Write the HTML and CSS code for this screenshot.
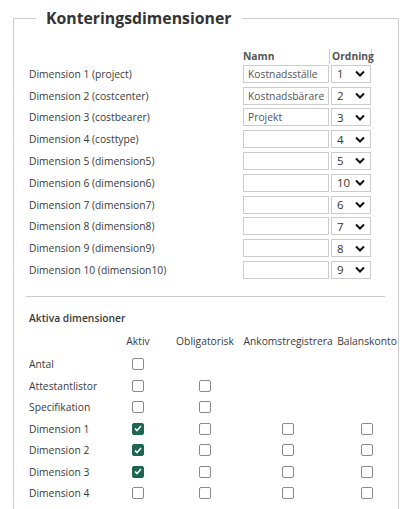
FILE: index.html
```html
<!DOCTYPE html>
<html>
<head>
  <meta charset="utf-8">
  <link rel="stylesheet" href="styles.css">
</head>
<body>
  <div class="page">
    <fieldset class="box">
      <legend>Konteringsdimensioner</legend>

      <!-- dimension names and order -->
      <div class="dims">
        <div class="dim-head">
          <span class="col-label"></span>
          <span class="col-name">Namn</span>
          <span class="col-order">Ordning</span>
        </div>
        <div class="dim-row">
          <span class="col-label">Dimension 1 (project)</span>
          <input class="name-input" type="text" value="Kostnadsställe">
          <div class="order-select"><span>1</span><svg width="10" height="7" viewBox="0 0 10 7"><path d="M1 1.5l4 4 4-4" fill="none" stroke="#111" stroke-width="2"/></svg></div>
        </div>
        <div class="dim-row">
          <span class="col-label">Dimension 2 (costcenter)</span>
          <input class="name-input" type="text" value="Kostnadsbärare">
          <div class="order-select"><span>2</span><svg width="10" height="7" viewBox="0 0 10 7"><path d="M1 1.5l4 4 4-4" fill="none" stroke="#111" stroke-width="2"/></svg></div>
        </div>
        <div class="dim-row">
          <span class="col-label">Dimension 3 (costbearer)</span>
          <input class="name-input" type="text" value="Projekt">
          <div class="order-select"><span>3</span><svg width="10" height="7" viewBox="0 0 10 7"><path d="M1 1.5l4 4 4-4" fill="none" stroke="#111" stroke-width="2"/></svg></div>
        </div>
        <div class="dim-row">
          <span class="col-label">Dimension 4 (costtype)</span>
          <input class="name-input" type="text" value="">
          <div class="order-select"><span>4</span><svg width="10" height="7" viewBox="0 0 10 7"><path d="M1 1.5l4 4 4-4" fill="none" stroke="#111" stroke-width="2"/></svg></div>
        </div>
        <div class="dim-row">
          <span class="col-label">Dimension 5 (dimension5)</span>
          <input class="name-input" type="text" value="">
          <div class="order-select"><span>5</span><svg width="10" height="7" viewBox="0 0 10 7"><path d="M1 1.5l4 4 4-4" fill="none" stroke="#111" stroke-width="2"/></svg></div>
        </div>
        <div class="dim-row">
          <span class="col-label">Dimension 6 (dimension6)</span>
          <input class="name-input" type="text" value="">
          <div class="order-select"><span>10</span><svg width="10" height="7" viewBox="0 0 10 7"><path d="M1 1.5l4 4 4-4" fill="none" stroke="#111" stroke-width="2"/></svg></div>
        </div>
        <div class="dim-row">
          <span class="col-label">Dimension 7 (dimension7)</span>
          <input class="name-input" type="text" value="">
          <div class="order-select"><span>6</span><svg width="10" height="7" viewBox="0 0 10 7"><path d="M1 1.5l4 4 4-4" fill="none" stroke="#111" stroke-width="2"/></svg></div>
        </div>
        <div class="dim-row">
          <span class="col-label">Dimension 8 (dimension8)</span>
          <input class="name-input" type="text" value="">
          <div class="order-select"><span>7</span><svg width="10" height="7" viewBox="0 0 10 7"><path d="M1 1.5l4 4 4-4" fill="none" stroke="#111" stroke-width="2"/></svg></div>
        </div>
        <div class="dim-row">
          <span class="col-label">Dimension 9 (dimension9)</span>
          <input class="name-input" type="text" value="">
          <div class="order-select"><span>8</span><svg width="10" height="7" viewBox="0 0 10 7"><path d="M1 1.5l4 4 4-4" fill="none" stroke="#111" stroke-width="2"/></svg></div>
        </div>
        <div class="dim-row">
          <span class="col-label">Dimension 10 (dimension10)</span>
          <input class="name-input" type="text" value="">
          <div class="order-select"><span>9</span><svg width="10" height="7" viewBox="0 0 10 7"><path d="M1 1.5l4 4 4-4" fill="none" stroke="#111" stroke-width="2"/></svg></div>
        </div>
      </div>

      <hr class="divider">

      <!-- active dimensions -->
      <div class="section-title">Aktiva dimensioner</div>
      <div class="active-grid">
        <span></span>
        <span class="head">Aktiv</span>
        <span class="head">Obligatorisk</span>
        <span class="head">Ankomstregistrera</span>
        <span class="head">Balanskonto</span>

        <span class="name">Antal</span>
        <span class="cell"><i class="check"></i></span>
        <span class="cell"></span>
        <span class="cell"></span>
        <span class="cell"></span>

        <span class="name">Attestantlistor</span>
        <span class="cell"><i class="check"></i></span>
        <span class="cell"><i class="check"></i></span>
        <span class="cell"></span>
        <span class="cell"></span>

        <span class="name">Specifikation</span>
        <span class="cell"><i class="check"></i></span>
        <span class="cell"><i class="check"></i></span>
        <span class="cell"></span>
        <span class="cell"></span>

        <span class="name">Dimension 1</span>
        <span class="cell"><i class="check on"><svg width="8" height="7" viewBox="0 0 8 7"><path d="M1 3.5l2 2 4-4.5" fill="none" stroke="#fff" stroke-width="1.6"/></svg></i></span>
        <span class="cell"><i class="check"></i></span>
        <span class="cell"><i class="check"></i></span>
        <span class="cell"><i class="check"></i></span>

        <span class="name">Dimension 2</span>
        <span class="cell"><i class="check on"><svg width="8" height="7" viewBox="0 0 8 7"><path d="M1 3.5l2 2 4-4.5" fill="none" stroke="#fff" stroke-width="1.6"/></svg></i></span>
        <span class="cell"><i class="check"></i></span>
        <span class="cell"><i class="check"></i></span>
        <span class="cell"><i class="check"></i></span>

        <span class="name">Dimension 3</span>
        <span class="cell"><i class="check on"><svg width="8" height="7" viewBox="0 0 8 7"><path d="M1 3.5l2 2 4-4.5" fill="none" stroke="#fff" stroke-width="1.6"/></svg></i></span>
        <span class="cell"><i class="check"></i></span>
        <span class="cell"><i class="check"></i></span>
        <span class="cell"><i class="check"></i></span>

        <span class="name">Dimension 4</span>
        <span class="cell"><i class="check"></i></span>
        <span class="cell"><i class="check"></i></span>
        <span class="cell"><i class="check"></i></span>
        <span class="cell"><i class="check"></i></span>

        <span class="name"></span>
        <span class="cell"><i class="check"></i></span>
        <span class="cell"><i class="check"></i></span>
        <span class="cell"><i class="check"></i></span>
        <span class="cell"><i class="check"></i></span>
      </div>
    </fieldset>
  </div>
</body>
</html>
```

FILE: styles.css
```css
* {
  box-sizing: border-box;
}

body {
  margin: 0;
  background-color: white;
  font-family: "Open Sans", sans-serif;
  font-size: 10.3px;
  color: #3a3a3a;
}

.page {
  padding: 0 10px 0 13px;
}

.box {
  margin: 7px 0 0 0;
  padding: 20px 0 0 15px;
  border: 1px solid #ccc;
  border-bottom: none;
  min-width: 0;
}

.box legend {
  margin-left: 7px;
  padding: 0 11px 0 10px;
  font-size: 15.8px;
  font-weight: bold;
  color: #333;
}

/* dimension names */

.dims {
  display: flex;
  flex-direction: column;
  gap: 3.8px;
}

.dim-head,
.dim-row {
  display: flex;
  align-items: center;
}

.col-label {
  width: 214px;
}

.dim-head {
  height: 14px;
  margin-bottom: -2px;
  font-weight: bold;
  color: #555;
}

.col-name {
  width: 86px;
}

.col-order {
  padding-left: 2px;
  width: 43px;
  height: 15px;
  line-height: 14px;
  border-left: 1px solid #ccc;
  border-right: 1px solid #ccc;
}

.name-input {
  width: 86px;
  height: 18px;
  margin: 0;
  padding: 0 4px;
  border: 1px solid #ccc;
  font-family: "Open Sans", sans-serif;
  font-size: 10.3px;
  color: #555;
}

.order-select {
  width: 40px;
  height: 18px;
  margin-left: 2px;
  padding: 0 5px;
  border: 1px solid #ccc;
  display: flex;
  align-items: center;
  justify-content: space-between;
  font-size: 11.5px;
  color: #333;
}

.divider {
  margin: 17px 13px 0 -3px;
  border: none;
  border-top: 1px solid #ccc;
}

/* active dimensions */

.section-title {
  margin-top: 14px;
  font-weight: 600;
  line-height: 15px;
}

.active-grid {
  display: grid;
  grid-template-columns: 79px 60px 74px 92px 66px;
  grid-template-rows: 25.5px;
  grid-auto-rows: 21.5px;
  align-items: center;
  margin-top: 2px;
}

.active-grid .head {
  text-align: center;
  white-space: nowrap;
}

.cell {
  display: flex;
  justify-content: center;
}

.check {
  width: 12px;
  height: 12px;
  border: 1px solid #8a8a8a;
  border-radius: 2px;
  background-color: white;
  display: flex;
  align-items: center;
  justify-content: center;
}

.check.on {
  background-color: #1d6652;
  border-color: #1d6652;
}
```
